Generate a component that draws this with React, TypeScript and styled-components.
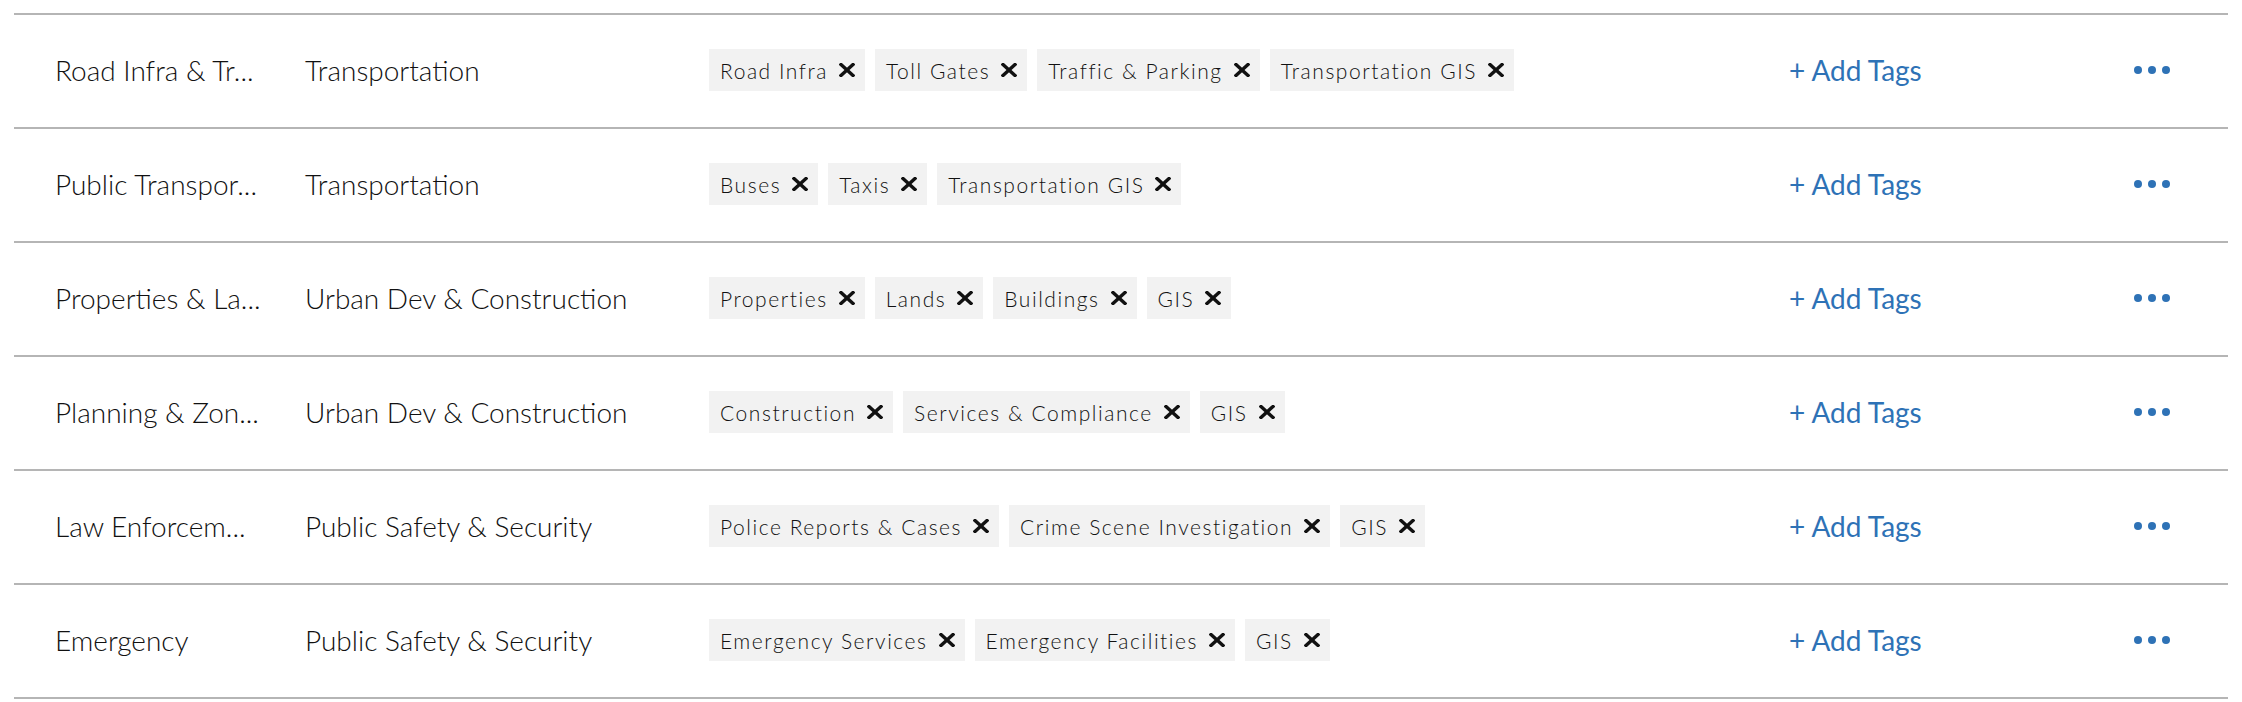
import React from 'react';
import styled, { createGlobalStyle } from 'styled-components';

type Domain = {
  id: number;
  name: string;
  sector: string;
  tags: string[];
};

const domains: Domain[] = [
  {
    id: 1,
    name: 'Road Infra & Tr...',
    sector: 'Transportation',
    tags: ['Road Infra', 'Toll Gates', 'Traffic & Parking', 'Transportation GIS'],
  },
  {
    id: 2,
    name: 'Public Transpor...',
    sector: 'Transportation',
    tags: ['Buses', 'Taxis', 'Transportation GIS'],
  },
  {
    id: 3,
    name: 'Properties & La...',
    sector: 'Urban Dev & Construction',
    tags: ['Properties', 'Lands', 'Buildings', 'GIS'],
  },
  {
    id: 4,
    name: 'Planning & Zon...',
    sector: 'Urban Dev & Construction',
    tags: ['Construction', 'Services & Compliance', 'GIS'],
  },
  {
    id: 5,
    name: 'Law Enforcem...',
    sector: 'Public Safety & Security',
    tags: ['Police Reports & Cases', 'Crime Scene Investigation', 'GIS'],
  },
  {
    id: 6,
    name: 'Emergency',
    sector: 'Public Safety & Security',
    tags: ['Emergency Services', 'Emergency Facilities', 'GIS'],
  },
];

const CloseIcon = () => (
  <svg width="16" height="14" viewBox="0 0 16 14">
    <path d="M2 1.5 L14 12.5 M14 1.5 L2 12.5" stroke="#111" strokeWidth="3.4" strokeLinecap="square" />
  </svg>
);

const MoreIcon = () => (
  <svg width="36" height="8" viewBox="0 0 36 8">
    <circle cx="4" cy="4" r="4" fill="#2e72b6" />
    <circle cx="18" cy="4" r="4" fill="#2e72b6" />
    <circle cx="32" cy="4" r="4" fill="#2e72b6" />
  </svg>
);

export default function App() {
  return (
    <>
      <GlobalStyle />
      <List>
        {domains.map((d) => (
          <Row key={d.id}>
            <Name>{d.name}</Name>
            <Sector>{d.sector}</Sector>
            <Tags>
              {d.tags.map((t) => (
                <Tag key={t}>
                  {t}
                  <RemoveButton type="button">
                    <CloseIcon />
                  </RemoveButton>
                </Tag>
              ))}
            </Tags>
            <AddTags type="button">+ Add Tags</AddTags>
            <MoreButton type="button">
              <MoreIcon />
            </MoreButton>
          </Row>
        ))}
      </List>
    </>
  );
}

const GlobalStyle = createGlobalStyle`
  body {
    margin: 0;
    background: #fff;
    font-family: Lato, 'Liberation Sans', sans-serif;
    color: #111;
  }
`;
const List = styled.div`
  margin: 13px 14px 0 14px;
  border-top: 2px solid #b5b5b5;
`;
const Row = styled.div`
  display: grid;
  grid-template-columns: 250px 404px 1080px 345px auto;
  align-items: center;
  height: 110px;
  padding: 0 0 2px 41px;
  border-bottom: 2px solid #b5b5b5;
`;
const Name = styled.div`
  font-size: 28px;
  font-weight: 300;
  white-space: nowrap;
  overflow: hidden;
`;
const Sector = styled.div`
  font-size: 28px;
  font-weight: 300;
  white-space: nowrap;
`;
const Tags = styled.div`
  display: flex;
  gap: 10px;
`;
const Tag = styled.div`
  display: flex;
  align-items: center;
  gap: 11px;
  height: 42px;
  padding: 0 10px 0 11px;
  background: #f2f2f2;
  font-size: 21px;
  font-weight: 300;
  letter-spacing: 1.55px;
  white-space: nowrap;
`;
const RemoveButton = styled.button`
  display: flex;
  padding: 0;
  border: 0;
  background: none;
  cursor: pointer;
`;
const AddTags = styled.button`
  justify-self: start;
  padding: 0;
  border: 0;
  background: none;
  font-family: Lato, 'Liberation Sans', sans-serif;
  font-size: 28px;
  color: #2e72b6;
  cursor: pointer;
`;
const MoreButton = styled.button`
  justify-self: start;
  display: flex;
  padding: 0;
  border: 0;
  background: none;
  cursor: pointer;
`;
